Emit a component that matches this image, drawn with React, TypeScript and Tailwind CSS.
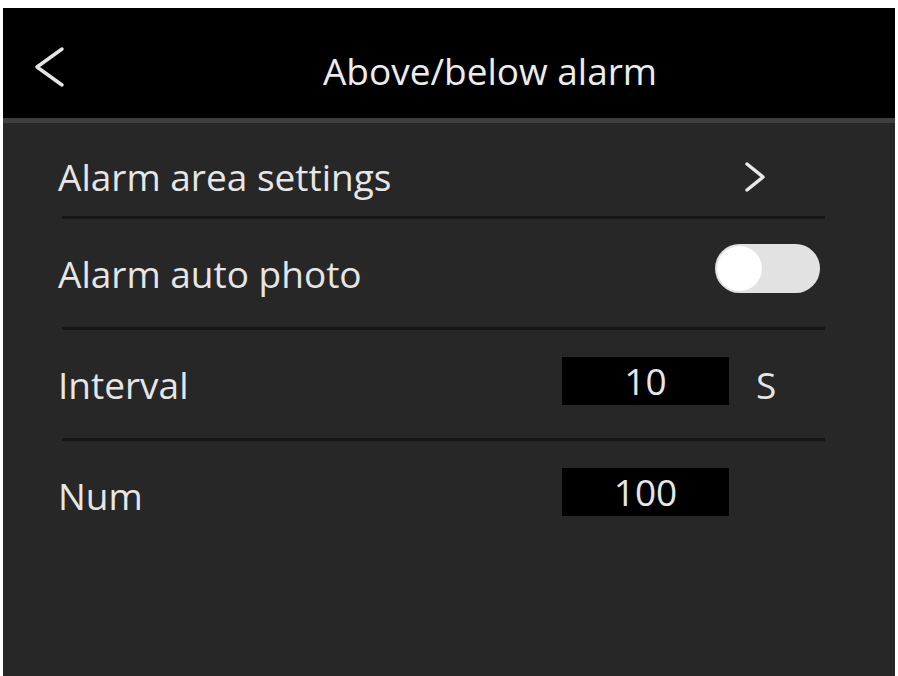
import React from "react";

const font = { fontFamily: '"Open Sans", "Noto Sans", sans-serif' };

function Divider() {
  return <div className="ml-[59px] w-[763px] h-[3px] bg-[#161616]" />;
}

export default function App() {
  return (
    <div className="w-[898px] h-[676px] bg-white pt-[8px] px-[3px] flex" style={font}>
      <div className="flex-1 flex flex-col">
        {/* Header */}
        <div className="h-[115px] bg-black flex items-start border-b-[5px] border-[#3f3f3f]">
          <svg className="ml-[31px] mt-[38px] shrink-0" width="31" height="44" viewBox="0 0 31 44" fill="none">
            <polyline points="28,3 3,21 28,39" stroke="#e4e4e4" strokeWidth="3.5" strokeLinecap="round" strokeLinejoin="round" />
          </svg>
          <div className="flex-1 pl-[20px] mt-[44px] text-center text-[37px] leading-none text-[#ececec]">
            Above/below alarm
          </div>
        </div>
        {/* Body */}
        <div className="flex-1 bg-[#272727] flex flex-col text-[#e6e6e6]">
          <div className="h-[93px] pt-[14px] flex items-center ml-[55px] mr-[70px]">
            <span className="flex-1 text-[37px] leading-none">Alarm area settings</span>
            <svg className="mr-[58px]" width="24" height="32" viewBox="0 0 24 32" fill="none">
              <polyline points="4,3 20,16 4,29" stroke="#e8e8e8" strokeWidth="3.5" strokeLinecap="round" strokeLinejoin="round" />
            </svg>
          </div>
          <Divider />
          <div className="h-[108px] flex items-center ml-[55px] mr-[70px]">
            <span className="flex-1 text-[37px] leading-none">Alarm auto photo</span>
            <div className="w-[105px] h-[49px] rounded-full bg-[#e2e2e2] flex items-center p-[2px] mr-[5px] mb-[9px]">
              <div className="w-[45px] h-[45px] rounded-full bg-white" />
            </div>
          </div>
          <Divider />
          <div className="h-[108px] flex items-center ml-[55px] mr-[70px]">
            <span className="flex-1 text-[37px] leading-none">Interval</span>
            <div className="w-[167px] h-[48px] bg-black flex items-center justify-center text-[37px] leading-none mb-[7px]">10</div>
            <div className="w-[96px] pl-[27px] text-[37px] leading-none">S</div>
          </div>
          <Divider />
          <div className="h-[108px] flex items-center ml-[55px] mr-[70px]">
            <span className="flex-1 text-[37px] leading-none">Num</span>
            <div className="w-[167px] h-[48px] bg-black flex items-center justify-center text-[37px] leading-none mr-[96px] mb-[7px]">100</div>
          </div>
        </div>
      </div>
    </div>
  );
}
